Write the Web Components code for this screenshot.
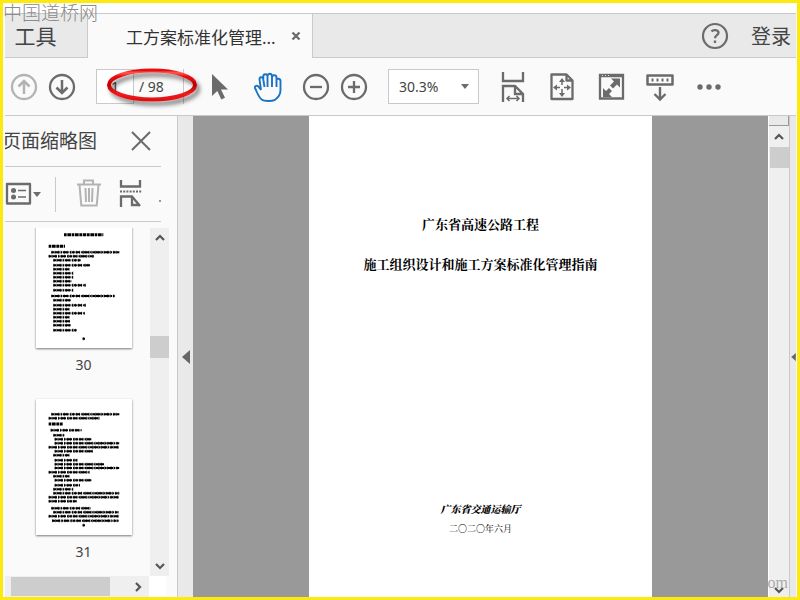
<!DOCTYPE html>
<html lang="zh-CN">
<head>
<meta charset="utf-8">
<title>PDF 阅读器</title>
<style>
html,body{height:100%;margin:0}
body{background:#fde910;font-family:"Noto Sans","Noto Sans CJK SC",sans-serif;font-size:14px;color:#444;overflow:hidden}
</style>
</head>
<body>
<pdf-app></pdf-app>
<script>
const base = ':host,*{box-sizing:border-box}button{appearance:none;border:0;background:none;padding:0;margin:0;color:inherit;font:inherit;display:grid;place-items:center}svg{display:block}';
function define(name, css, html) {
  customElements.define(name, class extends HTMLElement {
    constructor() {
      super();
      this.attachShadow({mode: 'open'}).innerHTML =
        `<style>${base}${css}</style>${typeof html === 'function' ? html(this) : html}`;
    }
  });
}

const icons = {
  up: '<circle cx="14" cy="15" r="12" stroke-width="2.3"/><path d="M14 22V9M8.5 14.500 14 9l5.500 5.500" stroke-width="2.500"/>',
  down: '<circle cx="14" cy="15" r="12" stroke-width="2.3"/><path d="M14 8v13M8.500 15.500 14 21l5.500-5.500" stroke-width="2.500"/>',
  cursor: '<path d="M6 2v22l5.300-5 4 8.500 3.700-1.700-4-8.300h7z" fill="currentColor" stroke="none"/>',
  hand: '<path d="M7 18 5 15.200C3.500 13 0 13.500 1 16c2 4 3.500 9.500 7 11.800 2 1.500 10 1.500 13 0C25 25 26.500 22 26.500 18V9c0-3-4-3-4-.5V15M7 18 5.500 7.500C5.200 4.700 8.500 4.500 9.200 7L10.500 15M9.300 7V4.500c0-3 4.200-3 4.200 0V15M13.500 4.300c0-3.500 4.500-3.500 4.500 0V15M18 5.500c0-3 4.500-3 4.500 0V15" stroke-width="1.900"/>',
  minus: '<circle cx="14" cy="15" r="12" stroke-width="2.3"/><path d="M8 15h12" stroke-width="2.300"/>',
  plus: '<circle cx="14" cy="15" r="12" stroke-width="2.3"/><path d="M8 15h12M14 9v12" stroke-width="2.300"/>',
  width: '<path d="M4 0v9h20V0M4 30V14h12l8 8v8M16 14v8h8" stroke-width="2.300"/><path d="M8 26.500h12M10.500 24 8 26.500l2.500 2.500M17.500 24l2.500 2.500-2.500 2.500" stroke-width="1.500"/>',
  page: '<path d="M3.500 2.500h15l6 6V27h-21zM18.500 2.500v6h6" stroke-width="2.300" stroke-linejoin="round"/><path d="M14 9v4M14 17v5M7 15.500h5M16 15.500h5" stroke-width="1.500"/><path d="m14 6 3 4h-6zM14 25l3-4h-6zM5 15.500l4-3v6zM23 15.500l-4-3v6z" fill="currentColor" stroke="none"/>',
  full: '<path d="M3 3h23v23.500H3zM3 4h23" stroke-width="2.300"/><path d="M14 6.500h9v9l-3-3-4 4-3-3 4-4zM6 16l3 3 3-3 3 3-3 3 3 3H6z" fill="currentColor" stroke="none"/><path d="M5 3.500h1M8 3.500h1M11 3.500h1" stroke="#ddd" stroke-width="1"/>',
  keyboard: '<path d="M1.500 3.500h25v9h-25z" stroke-width="2.500" stroke-linejoin="round"/><path d="M6.500 6.500v3M11.500 6.500v3M16.500 6.500v3M21.500 6.500v3" stroke-width="2"/><path d="M14 15v12M8.500 22 14 27.500l5.500-5.500" stroke-width="2.400"/>',
  more: '<g fill="currentColor" stroke="none"><circle cx="5" cy="15" r="2.700"/><circle cx="14" cy="15" r="2.700"/><circle cx="23" cy="15" r="2.700"/></g>',
  help: '<circle cx="14" cy="15" r="12" stroke-width="2.200"/><path d="M10.500 10.500c1.500-2 7-2 7 1.300 0 2.400-3.500 2.500-3.500 5.400M14 19.500v2.500" stroke-width="2.300"/>',
  close: '<path d="m5 6 18 18M23 6 5 24" stroke-width="2"/>',
  small: '<path d="m10.500 11.500 7 7M17.500 11.500l-7 7" stroke-width="2.300"/>',
  list: '<path d="M2 5h23v19.500H2z" stroke-width="2.300" stroke-linejoin="round"/><path d="M13 11.500h8M13 18h8M7 11.500h4M7 18h4" stroke-width="1.600"/><g fill="currentColor" stroke="none"><circle cx="8.500" cy="11.500" r="2.500"/><circle cx="8.500" cy="18" r="2.500"/></g>',
  trash: '<path d="M2 5.500h24M9 5V1.500h9V5M4.500 6l1.800 20.500h15.400L23.500 6M10.500 9l.5 14M14 9v14M17.500 9l-.5 14" stroke-width="2"/>',
  extract: '<path d="M4 1v6.500h19V1M4 28V17.500h11l8 9.500M15 17.500V26h8" stroke-width="2.300"/><path d="M3 12.500h22" stroke-width="2" stroke-dasharray="2 1.200"/>'
};
const icon = n => `<svg width="28" height="30" viewBox="0 0 28 30" fill="none" stroke="currentColor" aria-hidden="true">${icons[n]}</svg>`;

define('icon-button', ':host{display:block;color:#6b6b6b;flex:none}button{width:28px;height:30px}',
  el => `<button type="button" aria-label="${el.getAttribute('label')}">${icon(el.getAttribute('icon'))}</button>`);

define('tab-bar', `
:host{display:flex;flex:none;height:45px;border-top:1px solid #c9c9c9;background:#e9e9e9;color:#444}
button,.tab,.rest{border-bottom:1px solid #c9c9c9}
.tools{width:83px;border-right:1px solid #c9c9c9;font-size:21px;line-height:24px;padding-right:21px}
.tab{width:224px;background:#fafafa;border-bottom:0;display:flex;align-items:center;padding-left:38px;color:#333}
.tab button{border:0}
.tab .name{font-size:17px;flex:1;justify-content:start;white-space:nowrap}
.rest{flex:1;border-left:1px solid #c9c9c9;display:flex;align-items:center;justify-content:end;gap:22px;padding-right:5px}
.rest button{border:0;font-size:20px}
.tab icon-button{margin-right:2px}`, `
<button class="tools" type="button">工具</button>
<div class="tab"><button class="name" type="button">工方案标准化管理...</button><icon-button icon="small" label="关闭标签"></icon-button></div>
<div class="rest"><icon-button icon="help" label="帮助"></icon-button><button type="button">登录</button></div>`);

define('page-field', `
:host{display:flex;position:relative;width:90px;height:35px;flex:none;align-items:stretch}
label{display:flex;flex:none;width:88px;border-right:1px solid #c9c9c9;align-items:center;gap:5px}
input{width:38px;height:35px;border:1px solid #c9c9c9;background:#fff;text-align:center;font:inherit;color:#444;padding:0;margin:0;border-radius:0}
svg{position:absolute;left:7px;top:-5px;pointer-events:none;overflow:visible}`, `
<label><input value="1" aria-label="页码"><span>/ 98</span></label>
<svg width="100" height="44" aria-hidden="true"><defs><filter id="s" x="-10%" y="-20%" width="125%" height="160%"><feDropShadow dx="3" dy="4" stdDeviation="2" flood-color="#000" flood-opacity=".5"/></filter><linearGradient id="g" x2="0" y2="1"><stop stop-color="#e81010"/><stop offset=".08" stop-color="#ff5a5a"/><stop offset=".2" stop-color="#e81010"/><stop offset=".5" stop-color="#b00"/><stop offset=".8" stop-color="#f01c1c"/><stop offset="1" stop-color="#e01010"/></linearGradient></defs>
<ellipse cx="49" cy="21" rx="43" ry="14.500" fill="none" stroke="url(#g)" stroke-width="4" filter="url(#s)"/></svg>`);

define('zoom-select', `
:host{display:grid;width:91px;height:35px;flex:none;align-items:center}
select,svg{grid-area:1/1}
select{appearance:none;width:100%;height:35px;border:1px solid #c9c9c9;border-radius:0;background:#fff;padding:0 10px;font:inherit;color:#444;margin:0}
svg{justify-self:end;margin-right:10px;pointer-events:none}`, `
<select aria-label="缩放比例"><option>30.3%</option></select>
<svg width="8" height="5" aria-hidden="true"><path d="M0 0h8L4 5z" fill="#6b6b6b"/></svg>`);

define('tool-bar', `
:host{display:flex;flex:none;align-items:center;gap:20px;height:58px;padding:0 5px;background:#fafafa;border-bottom:1px solid #c9c9c9}
div{display:flex;gap:10px}.wide{gap:21px}
.off{color:#b3b3b3}.on{color:#1a73c4}`, `
<div><icon-button class="off" icon="up" label="上一页"></icon-button><icon-button icon="down" label="下一页"></icon-button></div>
<page-field></page-field>
<icon-button icon="cursor" label="选择"></icon-button>
<icon-button class="on" icon="hand" label="手形工具"></icon-button>
<div><icon-button icon="minus" label="缩小"></icon-button><icon-button icon="plus" label="放大"></icon-button></div>
<zoom-select></zoom-select>
<div class="wide"><icon-button icon="width" label="适合宽度"></icon-button><icon-button icon="page" label="适合页面"></icon-button><icon-button icon="full" label="全屏"></icon-button><icon-button icon="keyboard" label="工具栏"></icon-button><icon-button icon="more" label="更多"></icon-button></div>`);

const thumbs = {
  30: {top: -30, heads: [[102,220,38],[56,105,73]], rows: [[64,268,91],[56,192,103],[70,152,115],[70,180,130],[70,118,142],[70,130,154],[70,130,166],[70,126,178],[70,168,190],[70,130,205],[64,254,222],[70,125,235],[70,168,250],[70,118,262],[70,165,274],[70,118,286],[70,120,298],[70,125,310],[70,140,325],[158,165,350]]},
  31: {top: 12, heads: [[56,98,87]], rows: [[64,268,58],[56,208,70],[62,155,106],[70,105,121],[74,184,133],[74,268,145],[56,266,157],[74,190,169],[70,118,181],[74,142,196],[74,222,208],[74,268,219],[56,180,232],[70,118,244],[74,184,256],[74,150,271],[70,130,283],[70,268,295],[56,268,307],[56,140,319],[64,182,340],[70,266,352],[56,266,364],[66,266,377],[158,165,391]]}
};
const bars = a => a.map(([x, e, y]) => `M${x} ${y}H${e}`).join('');
define('page-thumb', `
:host{display:flex;flex-direction:column;align-items:center;height:187px;flex:none}
button{width:96px;height:136px;background:#fff;box-shadow:0 1px 2px #777}
span{font-size:14px;line-height:34px}`, el => {
  const n = el.getAttribute('number'), t = thumbs[n];
  return `<button type="button" aria-label="第 ${n} 页"><svg width="96" height="136" viewBox="18 ${t.top} 288 408" fill="none" stroke="#000" aria-hidden="true">
<path d="${bars(t.rows)}" stroke-width="6" stroke-dasharray="9 2 14 3 5 2 17 3 4 2.500"/>
<path d="${bars(t.rows)}" stroke-width="9" stroke-dasharray="4 5 3 7 5 4 3 6" stroke-opacity=".6"/>
<path d="${bars(t.heads)}" stroke-width="9" stroke-dasharray="8 2 11 2"/></svg></button><span>${n}</span>`;
});

define('side-panel', `
:host{display:flex;flex-direction:column;width:172px;flex:none;background:#fafafa;overflow:hidden}
header,.tools{display:flex;align-items:center;width:156px;border-bottom:1px solid #c9c9c9;flex:none}
header{height:51px;justify-content:space-between;padding-right:6px}
h2{margin:0 0 0 -3px;font-size:19px;font-weight:400;line-height:28px;color:#444;white-space:nowrap}
.tools{height:55px}
.caret{margin:0 14px 0 0}
.sep{width:1px;height:35px;background:#c9c9c9;margin-right:19px}
.off{color:#b3b3b3;margin-right:14px}
.tools i{width:2px;height:2px;background:#999;margin:14px 0 0 auto}
.body{flex:1;display:flex;min-height:0;padding-top:6px;width:164px}
.list{flex:1;overflow:hidden;padding-left:12px}
.list page-thumb:first-child{margin-top:-16px}
.v{width:19px;background:#efefef;display:flex;flex-direction:column;align-items:center}
.v button{width:19px;height:20px}
.v i{width:19px;height:22px;background:#cdcdcd;margin:88px 0 auto}
.foot{height:21px;flex:none;display:flex;width:161px;background:#fff}
.h{width:144px;background:#efefef;display:flex;align-items:center;justify-content:space-between;padding:0 1px 0 6px}
.h i{width:99px;height:19px;background:#cdcdcd}
.h button{width:20px;height:20px}`, `
<header><h2>页面缩略图</h2><icon-button icon="close" label="关闭面板"></icon-button></header>
<div class="tools"><icon-button icon="list" label="选项"></icon-button><svg class="caret" width="8" height="5" aria-hidden="true"><path d="M0 0h8L4 5z" fill="#6b6b6b"/></svg><div class="sep"></div><icon-button class="off" icon="trash" label="删除"></icon-button><icon-button icon="extract" label="提取页面"></icon-button><i></i></div>
<div class="body"><div class="list"><page-thumb number="30"></page-thumb><page-thumb number="31"></page-thumb></div>
<div class="v"><button type="button" aria-label="向上"><svg width="10" height="8" fill="none" stroke="#555" stroke-width="2.200"><path d="m1 6 4-4 4 4"/></svg></button><i></i><button type="button" aria-label="向下"><svg width="10" height="8" fill="none" stroke="#555" stroke-width="2.200"><path d="m1 2 4 4 4-4"/></svg></button></div></div>
<div class="foot"><div class="h"><i></i><button type="button" aria-label="向右"><svg width="8" height="10" fill="none" stroke="#555" stroke-width="2.200"><path d="m2 1 4 4-4 4"/></svg></button></div></div>`);

define('pane-toggle', `
:host{display:block;width:16px;flex:none;background:#e9e9e9;border-left:1px solid #c9c9c9}
:host(.end){width:7px}
:host(.end) svg{width:5px;height:8px}
button{width:100%;height:100%}`,
  `<button type="button" aria-label="折叠面板"><svg width="8" height="14" viewBox="0 0 8 14" aria-hidden="true"><path d="M8 0v14L0 7z" fill="#666"/></svg></button>`);

define('doc-page', `
:host{display:flex;flex:1;justify-content:center;background:#999;overflow:hidden}
article{width:343px;max-width:100%;background:#fff;color:#000;display:flex;flex-direction:column;align-items:center;padding-top:99px;font-family:"Liberation Serif","Noto Serif CJK SC","Noto Sans CJK SC",serif}
h1{margin:0 0 20px;font-size:13px;line-height:20px;font-weight:700;white-space:nowrap}
p{margin:0;font-size:9px;line-height:18px}
.org{font-size:10px;line-height:20px;font-weight:900;font-style:italic;margin-top:205px}`, `
<article><h1>广东省高速公路工程</h1><h1>施工组织设计和施工方案标准化管理指南</h1><p class="org">广东省交通运输厅</p><p>二〇二〇年六月</p></article>`);

define('doc-scroll', `
:host{display:flex;flex-direction:column;align-items:center;width:21px;flex:none;background:#efefef;border-left:1px solid #fff;position:relative}
.split{width:100%;height:10px;flex:none;background:#e9e9e9;border-right:1px solid #999;border-bottom:1px solid #999}
button{width:20px;height:21px;flex:none}
.thumb{width:19px;height:21px;background:#cdcdcd}
.last{margin-top:auto;height:14px}
span{position:absolute;right:1px;bottom:4px;font:16px/20px "Liberation Serif",serif;color:#aaa}`, `
<div class="split"></div><button type="button" aria-label="向上滚动"><svg width="12" height="9" fill="none" stroke="#555" stroke-width="2.200"><path d="m2 7 4-4 4 4"/></svg></button><div class="thumb"></div>
<span>om</span><button class="last" type="button" aria-label="向下滚动"><svg width="12" height="9" fill="none" stroke="#555" stroke-width="2.200"><path d="m2 2 4 4 4-4"/></svg></button>`);

define('pdf-app', `
:host{display:block;height:100vh;padding:3px;position:relative}
.window{height:100%;background:#fff;padding:10px 1px 0 2px;display:flex;flex-direction:column}
main{flex:1;min-height:0;display:flex}
.mark{position:absolute;left:3px;top:2px;font-size:19px;line-height:20px;color:#8c8c8c;pointer-events:none;font-family:"Noto Sans CJK SC",sans-serif;font-weight:300}`, `
<div class="window"><tab-bar></tab-bar><tool-bar></tool-bar>
<main><side-panel></side-panel><pane-toggle></pane-toggle><doc-page></doc-page><doc-scroll></doc-scroll><pane-toggle class="end"></pane-toggle></main></div>
<div class="mark">中国道桥网</div>`);
</script>
</body>
</html>
